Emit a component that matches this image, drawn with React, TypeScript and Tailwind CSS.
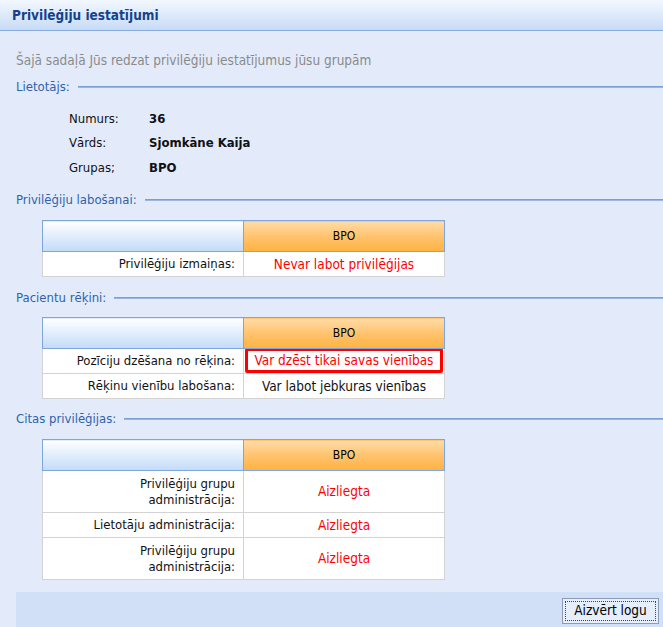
import React from 'react';

const font = { fontFamily: 'Tahoma, "DejaVu Sans Condensed", "DejaVu Sans", sans-serif' };

const Legend: React.FC<{ title: string; className?: string }> = ({ title, className }) => (
  <div className={`flex items-center h-[18px] ${className ?? ''}`}>
    <span className="text-[13px] text-[#2e62ad] pr-2 whitespace-nowrap">{title}</span>
    <div className="flex-1 h-[2px] bg-[#9bb7df] border-t border-[#7c9fd2]" />
  </div>
);

interface Row {
  label: React.ReactNode;
  value: string;
  red?: boolean;
  boxed?: boolean;
  tall?: boolean;
}

const PrivTable: React.FC<{ rows: Row[]; className?: string }> = ({ rows, className }) => (
  <table className={`ml-[26px] w-[403px] border-collapse text-[13px] ${className ?? ''}`}>
    <thead>
      <tr className="h-[31px]">
        <th className="w-[201px] border border-[#7ea6dc] bg-gradient-to-b from-white to-[#c3dbf7]" />
        <th className="border border-[#7ea6dc] bg-gradient-to-b from-[#ffdca8] via-[#ffc36c] to-[#ffb23f] font-normal text-[12px] text-black">
          BPO
        </th>
      </tr>
    </thead>
    <tbody>
      {rows.map((r, i) => (
        <tr key={i} className={r.tall ? 'h-[42px]' : 'h-[25px]'}>
          <td className="border border-[#d3d3d3] bg-white text-right pr-[8px] leading-[16px] text-[#111]">{r.label}</td>
          <td className="border border-[#d3d3d3] bg-white text-center p-0 text-[13.5px]">
            {r.boxed ? (
              <div className="mx-[1px] -mt-[1px] border-[3px] border-[#f00] rounded-[2px] text-[#ff0000] leading-[17px] py-[1px]">
                {r.value}
              </div>
            ) : (
              <span className={r.red ? 'text-[#ff0000]' : 'text-[#111]'}>{r.value}</span>
            )}
          </td>
        </tr>
      ))}
    </tbody>
  </table>
);

export default function App() {
  return (
    <div className="w-[663px] h-[627px] bg-[#e3ebfb] overflow-hidden" style={font}>
      <div className="h-[31px] border-b border-[#86abdc] bg-gradient-to-b from-[#f3f8ff] to-[#c7dbf6] flex items-center pl-[12px]">
        <span className="text-[13.5px] font-bold text-[#15428b]">Privilēģiju iestatījumi</span>
      </div>

      <div className="pl-4">
        <div className="mt-[20px] h-[18px] leading-[18px] text-[13.5px] text-[#8a8a8a]">
          Šajā sadaļā Jūs redzat privilēģiju iestatījumus jūsu grupām
        </div>

        <Legend title="Lietotājs:" className="mt-[9px]" />

        <div className="mt-[11px] ml-[53px] grid grid-cols-[80px_1fr] text-[13px] text-[#111]">
          <div className="h-[24px] leading-[24px]">Numurs:</div>
          <div className="h-[24px] leading-[24px] font-bold">36</div>
          <div className="h-[24px] leading-[24px]">Vārds:</div>
          <div className="h-[24px] leading-[24px] font-bold">Sjomkāne Kaija</div>
          <div className="h-[25px] leading-[25px]">Grupas;</div>
          <div className="h-[25px] leading-[25px] font-bold">BPO</div>
        </div>

        <Legend title="Privilēģiju labošanai:" className="mt-[11px]" />
        <PrivTable
          className="mt-[11px]"
          rows={[{ label: 'Privilēģiju izmaiņas:', value: 'Nevar labot privilēģijas', red: true }]}
        />

        <Legend title="Pacientu rēķini:" className="mt-[12px]" />
        <PrivTable
          className="mt-[10px]"
          rows={[
            { label: 'Pozīciju dzēšana no rēķina:', value: 'Var dzēst tikai savas vienības', boxed: true },
            { label: 'Rēķinu vienību labošana:', value: 'Var labot jebkuras vienības' },
          ]}
        />

        <Legend title="Citas privilēģijas:" className="mt-[11px]" />
        <PrivTable
          className="mt-[11px]"
          rows={[
            {
              label: (
                <>
                  Privilēģiju grupu
                  <br />
                  administrācija:
                </>
              ),
              value: 'Aizliegta',
              red: true,
              tall: true,
            },
            { label: 'Lietotāju administrācija:', value: 'Aizliegta', red: true },
            {
              label: (
                <>
                  Privilēģiju grupu
                  <br />
                  administrācija:
                </>
              ),
              value: 'Aizliegta',
              red: true,
              tall: true,
            },
          ]}
        />

        <div className="mt-[12px] h-[37px] bg-[#d2e0f7] flex items-center justify-end pr-[4px]">
          <button className="h-[26px] w-[97px] border border-[#8b9bb8] bg-[#e6eefb] p-[2px] text-[13.5px] text-black">
            <span className="flex h-full items-center justify-center border border-dotted border-[#444]">
              Aizvērt logu
            </span>
          </button>
        </div>
      </div>
    </div>
  );
}
